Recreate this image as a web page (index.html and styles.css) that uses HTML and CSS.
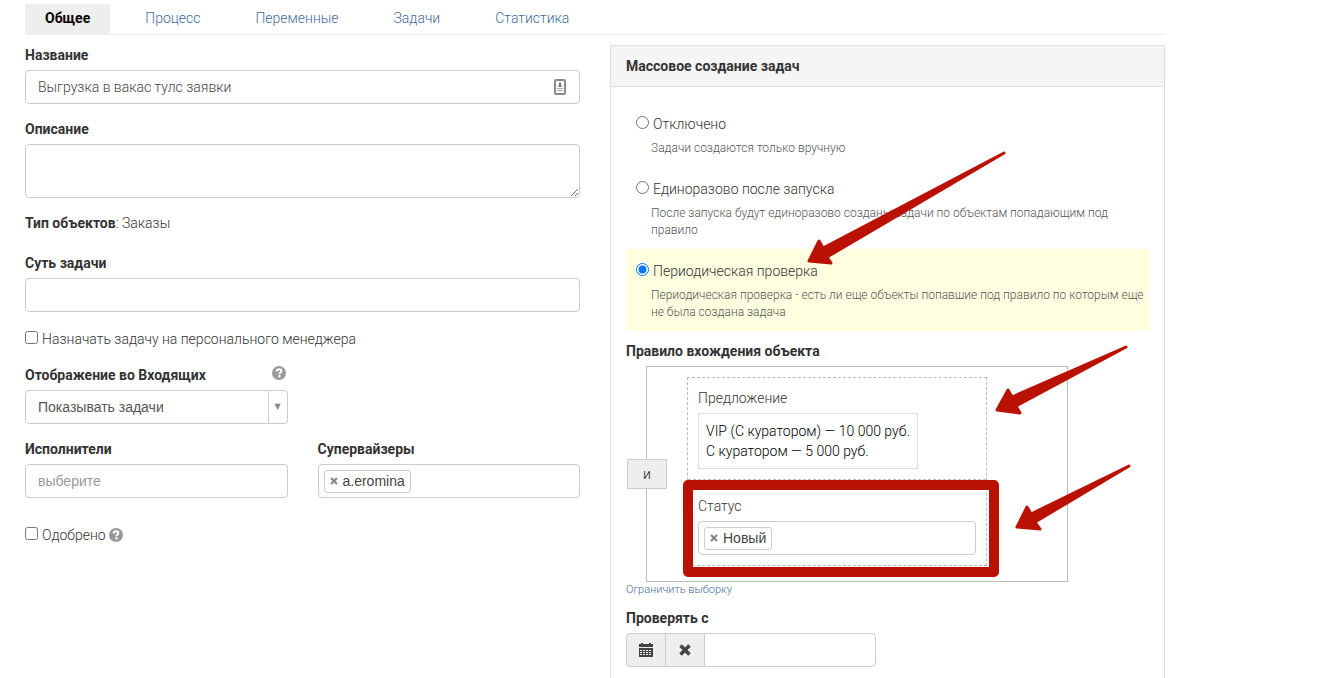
FILE: index.html
```html
<!DOCTYPE html>
<html lang="ru">
<head>
    <meta charset="UTF-8">
    <meta name="viewport" content="width=device-width, initial-scale=1.0">
    <title>Массовое создание задач</title>
    <link rel="stylesheet" href="styles.css">
</head>
<body>
    <div class="container">
        <nav class="tabs">
            <a class="tab active" href="#general">Общее</a>
            <a class="tab" href="#process">Процесс</a>
            <a class="tab" href="#variables">Переменные</a>
            <a class="tab" href="#tasks">Задачи</a>
            <a class="tab" href="#stats">Статистика</a>
        </nav>

        <form class="columns">
            <div class="column">
                <div class="form-group">
                    <label class="title" for="name">Название</label>
                    <div class="input-box">
                        <input class="form-control" id="name" type="text" value="Выгрузка в вакас тулс заявки">
                        <svg class="autofill-icon" viewBox="0 0 12 16" width="12" height="16">
                            <rect x="1" y="1" width="10" height="14" rx="1" fill="#fff" stroke="#8a8a8a" stroke-width="2"/>
                            <path d="M6 3.5v3M4.5 7h3" stroke="#777" stroke-width="2"/>
                            <path d="M3 9h6v1H3zM3 11h6v1H3z" fill="#aaa"/>
                        </svg>
                    </div>
                </div>

                <div class="form-group">
                    <label class="title" for="description">Описание</label>
                    <textarea class="form-control" id="description"></textarea>
                </div>

                <p class="object-type"><b>Тип объектов</b>: Заказы</p>

                <div class="form-group essence">
                    <label class="title" for="essence">Суть задачи</label>
                    <input class="form-control" id="essence" type="text">
                </div>

                <div class="check-row">
                    <input id="manager" type="checkbox">
                    <label for="manager">Назначать задачу на персонального менеджера</label>
                </div>

                <div class="pair">
                    <div class="form-group">
                        <div class="title-row">
                            <label class="title" for="inbox">Отображение во Входящих</label>
                            <svg class="help-icon" viewBox="0 0 14 14" width="14" height="14">
                                <circle cx="7" cy="7" r="7" fill="#999"/>
                                <path d="M4.8 5.4C4.8 3.9 5.7 3.2 7.1 3.2s2.3.7 2.3 1.9c0 1.5-2 1.4-2 3.1" fill="none" stroke="#fff" stroke-width="2"/>
                                <rect x="6.3" y="9.2" width="2.2" height="2.2" fill="#fff"/>
                            </svg>
                        </div>
                        <div class="select-box">
                            <select class="form-control" id="inbox">
                                <option>Показывать задачи</option>
                            </select>
                        </div>
                    </div>
                </div>

                <div class="pair">
                    <div class="form-group">
                        <label class="title" for="performers">Исполнители</label>
                        <input class="form-control picker" id="performers" type="text" placeholder="выберите">
                    </div>
                    <div class="form-group">
                        <label class="title" for="supervisors">Супервайзеры</label>
                        <div class="form-control tags">
                            <span class="tag">
                                <button class="tag-remove" type="button" aria-label="Удалить">
                                    <svg viewBox="0 0 8 8" width="8" height="8"><path d="M1 1l6 6M7 1L1 7" stroke="#888" stroke-width="2.2"/></svg>
                                </button>
                                a.eromina
                            </span>
                            <input class="tags-input" id="supervisors" type="text">
                        </div>
                    </div>
                </div>

                <div class="check-row approved">
                    <input id="approved" type="checkbox">
                    <label for="approved">Одобрено</label>
                    <svg class="help-icon" viewBox="0 0 14 14" width="14" height="14">
                        <circle cx="7" cy="7" r="7" fill="#999"/>
                        <path d="M4.8 5.4C4.8 3.9 5.7 3.2 7.1 3.2s2.3.7 2.3 1.9c0 1.5-2 1.4-2 3.1" fill="none" stroke="#fff" stroke-width="2"/>
                        <rect x="6.3" y="9.2" width="2.2" height="2.2" fill="#fff"/>
                    </svg>
                </div>
            </div>

            <section class="column panel">
                <h2 class="panel-heading">Массовое создание задач</h2>
                <div class="panel-body">
                    <div class="option">
                        <div class="option-row">
                            <input id="mode-off" type="radio" name="mode">
                            <label for="mode-off">Отключено</label>
                        </div>
                        <p class="option-help">Задачи создаются только вручную</p>
                    </div>
                    <div class="option">
                        <div class="option-row">
                            <input id="mode-once" type="radio" name="mode">
                            <label for="mode-once">Единоразово после запуска</label>
                        </div>
                        <p class="option-help">После запуска будут единоразово созданы задачи по объектам попадающим под правило</p>
                    </div>
                    <div class="option selected">
                        <div class="option-row">
                            <input id="mode-periodic" type="radio" name="mode" checked>
                            <label for="mode-periodic">Периодическая проверка</label>
                        </div>
                        <p class="option-help">Периодическая проверка - есть ли еще объекты попавшие под правило по которым еще не была создана задача</p>
                    </div>

                    <h3 class="title rule-title">Правило вхождения объекта</h3>
                    <div class="rule">
                        <button class="rule-operator" type="button">и</button>
                        <div class="rule-list">
                            <div class="condition">
                                <div class="condition-name">Предложение</div>
                                <div class="offers">
                                    VIP (С куратором) — 10 000 руб.<br>
                                    С куратором — 5 000 руб.
                                </div>
                            </div>
                            <div class="condition status">
                                <label class="condition-name" for="status">Статус</label>
                                <div class="form-control tags">
                                    <span class="tag">
                                        <button class="tag-remove" type="button" aria-label="Удалить">
                                            <svg viewBox="0 0 8 8" width="8" height="8"><path d="M1 1l6 6M7 1L1 7" stroke="#888" stroke-width="2.2"/></svg>
                                        </button>
                                        Новый
                                    </span>
                                    <input class="tags-input" id="status" type="text">
                                </div>
                                <div class="highlight"></div>
                            </div>
                        </div>
                    </div>
                    <a class="limit-link" href="#limit">Ограничить выборку</a>

                    <label class="title" for="check-from">Проверять с</label>
                    <div class="date-group">
                        <button class="date-button" type="button" aria-label="Календарь">
                            <svg viewBox="0 0 14 14" width="14" height="14">
                                <path d="M0 1h2V0h2v1h6V0h2v1h2v3H0zM0 5h14v9H0z" fill="#444"/>
                                <path d="M1 7.5h12M1 9.5h12M1 11.5h12" stroke="#eee" stroke-width="1" stroke-dasharray="2 1"/>
                            </svg>
                        </button>
                        <button class="date-button" type="button" aria-label="Очистить">
                            <svg viewBox="0 0 12 12" width="12" height="12"><path d="M1.5 1.5l9 9M10.5 1.5l-9 9" stroke="#444" stroke-width="3.6"/></svg>
                        </button>
                        <input class="form-control" id="check-from" type="text">
                    </div>
                </div>
            </section>
        </form>

        <!-- hint arrows drawn over the form -->
        <svg class="arrows" viewBox="0 0 1344 678" width="1344" height="678">
            <path d="M1004 153L823 248L819 241L809 261L831 263L827 257Z"/>
            <path d="M1126 347L1012 397L1008 390L997 410L1020 413L1016 406Z"/>
            <path d="M1129 466L1031 514L1027 507L1017 527L1040 529L1035 522Z"/>
        </svg>
    </div>
</body>
</html>
```
FILE: styles.css
```css
* {
    box-sizing: border-box;
}

body {
    margin: 0;
    font-family: Roboto, "Noto Sans", sans-serif;
    font-size: 14px;
    font-weight: 300;
    line-height: 20px;
    color: #333;
    background: #fff;
}

.container {
    max-width: 1190px;
    padding: 4px 25px 0;
}

.tabs {
    display: flex;
    gap: 15px;
    border-bottom: 1px solid #eee;
}

.tab {
    padding: 4px 20px 6px;
    color: #3f6a9a;
    text-decoration: none;
}

.tab.active {
    background: #eee;
    color: #000;
    font-weight: bold;
}

.columns {
    display: grid;
    grid-template-columns: minmax(0, 1fr) minmax(0, 1fr);
    gap: 30px;
    padding-top: 10px;
}

.form-group {
    margin-bottom: 15px;
}

.title {
    display: block;
    margin: 0 0 5px;
    font-size: 14px;
    line-height: 20px;
    font-weight: bold;
    color: #333;
}

.form-control {
    display: block;
    width: 100%;
    height: 34px;
    padding: 6px 12px;
    border: 1px solid #ccc;
    border-radius: 4px;
    background: #fff;
    font: inherit;
    color: #444;
}

textarea.form-control {
    height: 54px;
}

.input-box {
    position: relative;
}

.autofill-icon {
    position: absolute;
    top: 9px;
    right: 14px;
}

.object-type {
    margin: 0 0 20px;
}

.object-type b {
    font-weight: bold;
}

.essence {
    margin-bottom: 17px;
}

.check-row {
    display: flex;
    align-items: center;
    margin-bottom: 16px;
}

.check-row input,
.option-row input {
    width: 13px;
    height: 13px;
    margin: 0 4px 3px 0;
}

.approved {
    margin-top: 12px;
}

.pair {
    display: grid;
    grid-template-columns: minmax(0, 1fr) minmax(0, 1fr);
    gap: 30px;
}

.title-row {
    display: flex;
    justify-content: space-between;
    padding-right: 2px;
}

.help-icon {
    margin: 1px 0 1px 3px;
}

.select-box {
    position: relative;
}

.select-box select {
    appearance: none;
    font-family: "Liberation Sans", sans-serif;
    color: #555;
}

.select-box::after {
    content: "▼";
    position: absolute;
    top: 1px;
    right: 1px;
    bottom: 1px;
    width: 18px;
    border-left: 1px solid #ccc;
    font: 8px/32px "DejaVu Sans", sans-serif;
    text-align: center;
    color: #888;
    pointer-events: none;
}

.picker {
    font-family: "Liberation Sans", sans-serif;
}

.picker::placeholder {
    color: #999;
}

.tags {
    display: flex;
    align-items: center;
    padding: 5px;
}

.tag {
    display: flex;
    align-items: center;
    gap: 5px;
    height: 23px;
    padding: 0 5px;
    border: 1px solid #ccc;
    border-radius: 3px;
    font-family: "Liberation Sans", sans-serif;
}

.tag-remove {
    display: flex;
    padding: 0;
    border: 0;
    background: none;
}

.tags-input {
    flex: 1;
    min-width: 0;
    border: 0;
    outline: 0;
    background: none;
}

.panel {
    border: 1px solid #ddd;
}

.panel-heading {
    margin: 0;
    padding: 10px 15px;
    border-bottom: 1px solid #ddd;
    background: #f5f5f5;
    font-size: 14px;
    line-height: 20px;
    color: #333;
}

.panel-body {
    padding: 15px;
}

.option {
    padding: 12px 4px 10px 10px;
}

.option.selected {
    background: #ffffdf;
}

.option-row {
    display: flex;
    align-items: center;
}

.option-help {
    margin: 6px 0 0 15px;
    font-size: 12px;
    line-height: 17px;
    color: #555;
}

.rule-title {
    margin-top: 10px;
}

.rule {
    position: relative;
    width: 422px;
    max-width: 100%;
    margin-left: 20px;
    padding: 10px 80px 15px 40px;
    border: 1px solid #bbb;
}

.rule-operator {
    position: absolute;
    top: 50%;
    left: -20px;
    width: 40px;
    height: 30px;
    margin-top: -15px;
    padding: 0;
    border: 1px solid #ccc;
    background: #eee;
    font: inherit;
    color: #222;
}

.rule-list {
    border: 1px dashed #bbb;
}

.condition {
    position: relative;
    padding: 10px;
}

.condition.status {
    padding-top: 16px;
    border-top: 1px dashed #bbb;
}

.condition-name {
    display: block;
    margin-bottom: 5px;
}

.offers {
    width: fit-content;
    padding: 7px;
    border: 1px solid #ddd;
    color: #000;
}

/* red frame around the status condition */
.highlight {
    position: absolute;
    inset: 0 -13px -12px -5px;
    border: 10px solid #b91203;
    border-radius: 5px;
    pointer-events: none;
}

.limit-link {
    display: block;
    margin-bottom: 10px;
    font-size: 11px;
    line-height: 16px;
    color: #3f6a9a;
    text-decoration: none;
}

.date-group {
    display: flex;
    width: 250px;
}

.date-button {
    display: flex;
    flex: none;
    align-items: center;
    justify-content: center;
    width: 39px;
    padding: 0;
    border: 1px solid #ccc;
    border-right: 0;
    background: #eee;
}

.date-button:first-child {
    border-radius: 4px 0 0 4px;
}

.date-group .form-control {
    flex: 1;
    min-width: 0;
    border-radius: 0 4px 4px 0;
}

.arrows {
    position: absolute;
    top: 0;
    left: 0;
    fill: #b91203;
    stroke: #b91203;
    stroke-width: 3;
    stroke-linejoin: round;
    pointer-events: none;
}
```
